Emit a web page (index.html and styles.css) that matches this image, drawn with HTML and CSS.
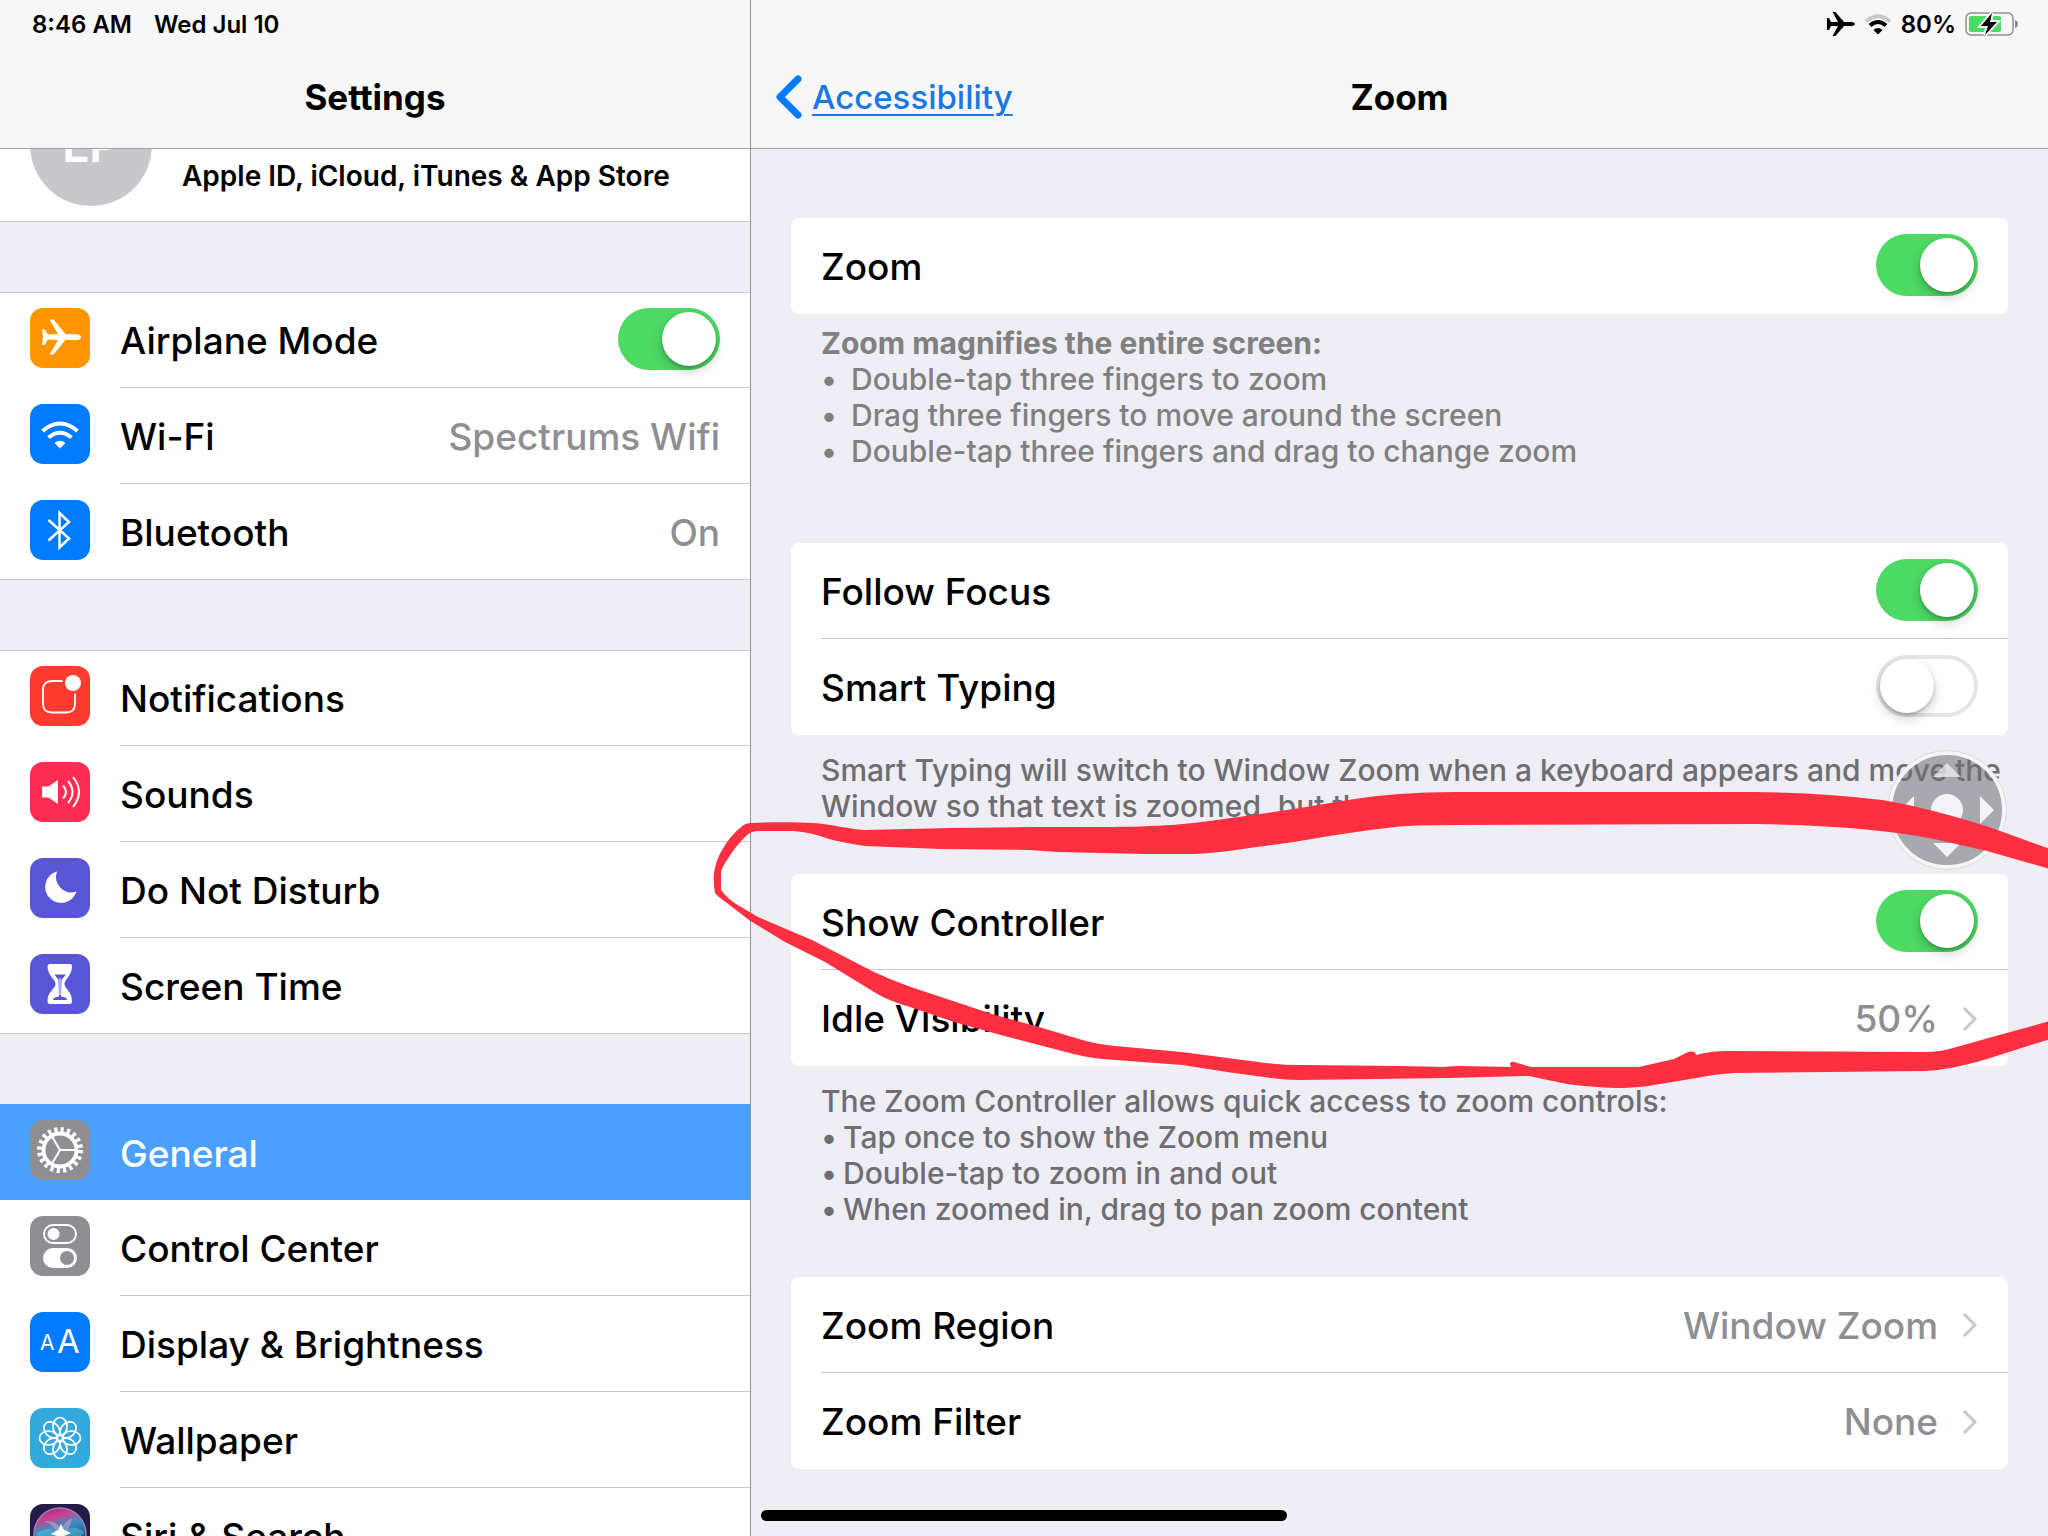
FILE: index.html
```html
<!DOCTYPE html>
<html lang="en">
<head>
    <meta charset="UTF-8">
    <meta name="viewport" content="width=device-width, initial-scale=1.0">
    <title>Settings - Zoom</title>
    <link rel="stylesheet" href="styles.css">
</head>
<body>
    <div class="screen">
        <!-- Left column -->
        <aside class="sidebar">
            <header class="bar">
                <div class="status">
                    <span>8:46 AM</span>
                    <span>Wed Jul 10</span>
                </div>
                <h1 class="bar-title">Settings</h1>
            </header>

            <div class="profile">
                <div class="avatar">LP</div>
                <p class="profile-text">Apple ID, iCloud, iTunes &amp; App Store</p>
            </div>

            <nav>
                <div class="group">
                    <div class="item">
                        <svg class="icon orange" viewBox="0 0 60 60"><path fill="#fff" d="M12 21 L14.500 21 L18 26.500 L28 26 L19.500 11.500 L23.500 11.500 L35.500 26 L47 26.300 Q51 27 51 29 Q51 31.500 47 32 L35.500 32 L23.500 46.500 L19.500 46.500 L28 32 L18 31.500 L14.500 37 L12 37 L13 29 Z"/></svg>
                        <div class="item-body">
                            <label for="airplane">Airplane Mode</label>
                            <input class="switch" type="checkbox" id="airplane" checked>
                        </div>
                    </div>
                    <a class="item" href="#">
                        <svg class="icon blue" viewBox="0 0 60 60"><g fill="none" stroke="#fff" stroke-width="4"><path d="M12.500 27 Q30 12 47.500 27"/><path d="M18.500 33.500 Q30 24 41.500 33.500"/></g><path fill="#fff" d="M24.500 39 Q30 34.500 35.500 39 L30 44.500 Z"/></svg>
                        <span class="item-body"><span>Wi-Fi</span><span class="value">Spectrums Wifi</span></span>
                    </a>
                    <a class="item" href="#">
                        <svg class="icon blue" viewBox="0 0 60 60"><path fill="none" stroke="#fff" stroke-width="2.500" d="M18.500 20 L39 38.500 L29.500 47.500 V13 L39 22 L18.500 40.500"/></svg>
                        <span class="item-body"><span>Bluetooth</span><span class="value">On</span></span>
                    </a>
                </div>

                <div class="group">
                    <a class="item" href="#">
                        <svg class="icon red" viewBox="0 0 60 60"><path fill="none" stroke="#fff" stroke-width="1.800" d="M32.500 15 H22 Q13 15 13 24 V38 Q13 46.500 22 46.500 H36 Q45 46.500 45 38 V27.500"/><circle cx="43" cy="17" r="8" fill="#fff"/></svg>
                        <span class="item-body">Notifications</span>
                    </a>
                    <a class="item" href="#">
                        <svg class="icon pink" viewBox="0 0 60 60"><path fill="#fff" d="M12 24.500 H18.500 L28 18 V42 L18.500 35.500 H12 Z"/><g fill="none" stroke="#fff" stroke-width="2"><path d="M33 23.500 Q39 30 33 36.500"/><path d="M38 19 Q47 30 38 41"/><path d="M43 15 Q55 30 43 45"/></g></svg>
                        <span class="item-body">Sounds</span>
                    </a>
                    <a class="item" href="#">
                        <svg class="icon purple" viewBox="0 0 60 60"><path fill="#fff" d="M27 13.500 A16 16 0 1 0 46.500 33.500 A15.500 15.500 0 0 1 27 13.500 Z"/></svg>
                        <span class="item-body">Do Not Disturb</span>
                    </a>
                    <a class="item" href="#">
                        <svg class="icon purple" viewBox="0 0 60 60"><path fill="#fff" d="M20 10 H40 Q42 10 42 12 C42 22 34.500 25 34.500 30 C34.500 35 42 37 42 47 Q42 50 40 50 H20 Q17.500 50 17.500 47 C17.500 37 25.500 35 25.500 30 C25.500 25 17.500 22 17.500 12 Q17.500 10 20 10 Z"/><path fill="#5856d6" d="M24.500 20.500 H36 L31.500 26 L31 42.500 Q37 43 37 46 H23 Q23 43 29 42.500 L28.500 26 Z"/><path stroke="#fff" d="M30 24 V41"/></svg>
                        <span class="item-body">Screen Time</span>
                    </a>
                </div>

                <div class="group">
                    <a class="item selected" href="#">
                        <svg class="icon gray" viewBox="0 0 60 60"><g fill="none" stroke="#fff"><circle cx="30" cy="30" r="20.500" stroke-width="5" stroke-dasharray="3.220 3.220"/><circle cx="30" cy="30" r="16.500" stroke-width="3.800"/><path stroke-width="2" d="M30 30 H46 M30 30 L22 16.500 M30 30 L22 43.500"/></g></svg>
                        <span class="item-body">General</span>
                    </a>
                    <a class="item" href="#">
                        <svg class="icon gray" viewBox="0 0 60 60"><rect x="14" y="9" width="32" height="18" rx="9" fill="none" stroke="#fff" stroke-width="2"/><circle cx="23.500" cy="18" r="6" fill="#fff"/><rect x="13" y="32" width="34" height="20" rx="10" fill="#fff"/><circle cx="37" cy="42" r="7" fill="#8e8e93"/></svg>
                        <span class="item-body">Control Center</span>
                    </a>
                    <a class="item" href="#">
                        <svg class="icon blue" viewBox="0 0 60 60"><text class="letter" x="10" y="38" font-size="21">A</text><text class="letter" x="27" y="41" font-size="33">A</text></svg>
                        <span class="item-body">Display &amp; Brightness</span>
                    </a>
                    <a class="item" href="#">
                        <svg class="icon sky" viewBox="0 0 60 60">
                            <defs><ellipse id="petal" cx="30" cy="18.500" rx="7" ry="9"/></defs>
                            <g fill="none" stroke="#fff" stroke-width="1.700">
                                <use href="#petal"/>
                                <use href="#petal" transform="rotate(45 30 30)"/>
                                <use href="#petal" transform="rotate(90 30 30)"/>
                                <use href="#petal" transform="rotate(135 30 30)"/>
                                <use href="#petal" transform="rotate(180 30 30)"/>
                                <use href="#petal" transform="rotate(225 30 30)"/>
                                <use href="#petal" transform="rotate(270 30 30)"/>
                                <use href="#petal" transform="rotate(315 30 30)"/>
                            </g>
                        </svg>
                        <span class="item-body">Wallpaper</span>
                    </a>
                    <a class="item" href="#">
                        <svg class="icon siri" viewBox="0 0 60 60">
                            <defs>
                                <linearGradient id="orb" x1="0" y1="0" x2="0.300" y2="1">
                                    <stop offset="0" stop-color="#7a2a80"/>
                                    <stop offset="0.250" stop-color="#d23c8c"/>
                                    <stop offset="0.450" stop-color="#3f8fc0"/>
                                    <stop offset="1" stop-color="#1b2f6b"/>
                                </linearGradient>
                            </defs>
                            <circle cx="30" cy="30" r="26" fill="url(#orb)" stroke="#9a7fb0" stroke-width="1.500"/>
                            <path fill="#4fc3dc" opacity="0.500" d="M6 30 Q20 20 30 30 Q42 18 54 28 Q44 44 30 44 Q14 44 6 30 Z"/>
                            <path fill="#e9a0cc" opacity="0.500" d="M14 17 Q26 16 31 25 Q38 14 42 15 Q40 25 34 29 H26 Q24 20 14 17 Z"/>
                            <path fill="#fff" d="M31 20 L34 26 L41 29 L34 32 L30 40 L27 32 L21 30 L28 26 Z"/>
                        </svg>
                        <span class="item-body">Siri &amp; Search</span>
                    </a>
                </div>
            </nav>
        </aside>

        <!-- Right column -->
        <main class="detail">
            <header class="bar">
                <div class="status status-right">
                    <svg width="28" height="26" viewBox="0 0 28 26"><path d="M0 7 L2 7 L4 11 L11 11 L5.500 1 L8.500 1 L17 11 L25 11 Q28 11.500 28 13 Q28 14.500 25 15 L17 15 L8.500 25 L5.500 25 L11 15 L4 15 L2 19 L0 19 Z"/></svg>
                    <svg width="28" height="22" viewBox="0 0 28 22"><g fill="none" stroke-width="4"><path stroke="#c8c8ca" d="M2 8.500 Q14 -2 26 8.500"/><path stroke="#000" d="M6 12.500 Q14 5.500 22 12.500"/></g><path d="M9.500 17 Q14 13 18.500 17 L14 21.500 Z"/></svg>
                    <span>80%</span>
                    <svg width="54" height="26" viewBox="0 0 54 26"><rect x="1" y="2" width="47" height="22" rx="5" fill="none" stroke="#8e8e91" stroke-width="1.500"/><rect x="4" y="5" width="32" height="16" rx="2" fill="#4cd964"/><path fill="#8e8e91" d="M50 9 Q53 10 53 13 Q53 16 50 17 Z"/><path stroke="#f7f7f7" stroke-width="4" d="M27 2 L16 15 H23 L20 24 L32 11 H25 Z"/><path d="M27 2 L16 15 H23 L20 24 L32 11 H25 Z"/></svg>
                </div>
                <div class="nav-row">
                    <a class="back" href="#">
                        <svg width="28" height="44" viewBox="0 0 28 44"><path fill="none" stroke="#007aff" stroke-width="7" stroke-linecap="round" stroke-linejoin="round" d="M23 4 L5 22 L23 40"/></svg>
                        <span>Accessibility</span>
                    </a>
                    <h2 class="bar-title">Zoom</h2>
                </div>
            </header>

            <div class="content">
                <section>
                    <div class="card">
                        <div class="row">
                            <label for="zoom">Zoom</label>
                            <input class="switch" type="checkbox" id="zoom" checked>
                        </div>
                    </div>
                    <div class="note light">
                        <strong>Zoom magnifies the entire screen:</strong>
                        <ul class="wide">
                            <li>Double-tap three fingers to zoom</li>
                            <li>Drag three fingers to move around the screen</li>
                            <li>Double-tap three fingers and drag to change zoom</li>
                        </ul>
                    </div>
                </section>

                <section>
                    <div class="card">
                        <div class="row">
                            <label for="follow">Follow Focus</label>
                            <input class="switch" type="checkbox" id="follow" checked>
                        </div>
                        <div class="row">
                            <label for="typing">Smart Typing</label>
                            <input class="switch" type="checkbox" id="typing">
                        </div>
                    </div>
                    <p class="note">Smart Typing will switch to Window Zoom when a keyboard appears and move the<br>Window so that text is zoomed, but the keyboard is not.</p>
                </section>

                <section>
                    <div class="card">
                        <div class="row">
                            <label for="controller">Show Controller</label>
                            <input class="switch" type="checkbox" id="controller" checked>
                        </div>
                        <a class="row" href="#">
                            <span>Idle Visibility</span>
                            <span class="value">50%</span>
                            <svg class="chevron" viewBox="0 0 16 26"><path d="M2 2 L13 13 L2 24"/></svg>
                        </a>
                    </div>
                    <div class="note">
                        The Zoom Controller allows quick access to zoom controls:
                        <ul>
                            <li>Tap once to show the Zoom menu</li>
                            <li>Double-tap to zoom in and out</li>
                            <li>When zoomed in, drag to pan zoom content</li>
                        </ul>
                    </div>
                </section>

                <section>
                    <div class="card">
                        <a class="row" href="#">
                            <span>Zoom Region</span>
                            <span class="value">Window Zoom</span>
                            <svg class="chevron" viewBox="0 0 16 26"><path d="M2 2 L13 13 L2 24"/></svg>
                        </a>
                        <a class="row" href="#">
                            <span>Zoom Filter</span>
                            <span class="value">None</span>
                            <svg class="chevron" viewBox="0 0 16 26"><path d="M2 2 L13 13 L2 24"/></svg>
                        </a>
                    </div>
                </section>
            </div>
            <div class="home-bar"></div>
        </main>

        <!-- Floating zoom controller -->
        <button class="controller" aria-label="Zoom Controller">
            <svg viewBox="0 0 120 120"><circle cx="60" cy="60" r="57" fill="#6f6f74" fill-opacity="0.550" stroke="#f6f6f9" stroke-width="4"/><circle cx="60" cy="60" r="59.500" fill="none" stroke="#dcdce0"/><g fill="#f4f4f8"><circle cx="60" cy="60" r="16"/><path d="M93 46 L107 60 L93 74 Z"/><path d="M27 46 L13 60 L27 74 Z"/><path d="M46 93 L60 107 L74 93 Z"/><path fill-opacity="0.700" d="M46 27 L60 13 L74 27 Z"/></g></svg>
        </button>

        <!-- Marker line -->
        <svg class="marker" viewBox="0 0 2048 1536">
            <path fill="#ff2f42" d="M751 823 C775 822 795 822 814 823 C835 825 848 829 865 830 L950 828 L1030 827 L1102 827 C1130 827 1155 826 1173 825 C1215 821 1260 814 1300 808 L1348 800 Q1395 792 1457 792 L1753 792 Q1825 793 1882 800 Q1930 808 1992 828 L2050 849 V869
                L1987 851 L1934 839 Q1870 826 1758 824 L1457 825 Q1410 825 1395 827 Q1350 832 1294 842 L1249 848 Q1210 854 1187 854 L1146 854 L1057 852 L1030 850 L941 849 L865 846 Q845 843 829 839 Q810 832 794 831 L758 831 Q750 831 745 837 Q735 847 729 857 Q722 867 721 872 L721 890 Q727 898 736 904 L758 917
                L812 940 L874 972 Q900 984 932 994 L995 1015 L1039 1027 L1079 1039 Q1095 1044 1115 1046 L1182 1052 L1258 1062 Q1280 1065 1300 1065 L1400 1066 L1443 1067 L1457 1066 L1511 1067 Q1508 1061 1514 1062 L1531 1067 H1639 L1674 1059 L1688 1052 Q1696 1050 1696 1055 Q1710 1051 1729 1051 L1925 1052 Q1940 1052 1953 1048 L1992 1037 L2050 1021 V1039
                L1987 1059 Q1950 1070 1925 1071 L1734 1073 Q1715 1074 1696 1078 L1648 1086 Q1630 1088 1617 1088 Q1590 1087 1567 1084 L1543 1079 L1529 1076 L1448 1078 L1300 1080 Q1285 1080 1271 1078 L1227 1072 L1182 1065 L1102 1059 Q1083 1057 1066 1052 L1008 1037 L954 1022 L910 1007 Q890 1001 879 995 L825 962 L785 942 L749 920 L727 903 Q717 896 715 893 Q713 880 714 873 Q716 860 722 850 Q730 836 740 828 Q745 823 751 823 Z"/>
        </svg>
    </div>
</body>
</html>
```
FILE: styles.css
```css
* {
    box-sizing: border-box;
}

body {
    margin: 0;
    font-family: 'Inter', sans-serif;
    font-size: 37px;
    font-weight: 500;
    color: #000;
    background-color: #efeef4;
}

h1, h2, p, ul {
    margin: 0;
    padding: 0;
}

a {
    color: inherit;
    text-decoration: none;
}

.screen {
    position: relative;
    display: grid;
    grid-template-columns: 751px 1fr;
    height: 100vh;
    overflow: hidden;
}

.sidebar {
    border-right: 1px solid #8e8e93;
    overflow: hidden;
}

.detail {
    display: flex;
    flex-direction: column;
    overflow: hidden;
}

/* Top bars */
.bar {
    height: 149px;
    flex-shrink: 0;
    background-color: #f7f7f7;
    border-bottom: 1px solid #a2a2aa;
}

.status {
    display: flex;
    align-items: center;
    gap: 22px;
    height: 48px;
    padding: 0 32px;
    font-size: 24px;
    font-weight: 600;
}

.status-right {
    justify-content: flex-end;
    gap: 9px;
    padding: 0 29px;
}

.bar-title {
    font-size: 35px;
    font-weight: 700;
    line-height: 98px;
    text-align: center;
}

.nav-row {
    display: grid;
    grid-template-columns: 1fr auto 1fr;
    align-items: center;
}

.back {
    display: flex;
    align-items: center;
    gap: 9px;
    padding-left: 24px;
    font-size: 33px;
    color: #1d77e2;
}

.back span {
    text-decoration: underline;
    text-decoration-thickness: 2px;
    text-underline-offset: 5px;
}

/* Sidebar */
.profile {
    display: flex;
    align-items: flex-end;
    gap: 30px;
    height: 73px;
    padding: 0 30px 15px;
    font-size: 28px;
    font-weight: 600;
    background-color: #fff;
    border-bottom: 1px solid #c8c7cc;
    overflow: hidden;
}

.avatar {
    flex-shrink: 0;
    width: 122px;
    height: 122px;
    border-radius: 50%;
    background-color: #c7c7cc;
    color: #fff;
    font-size: 48px;
    line-height: 122px;
    text-align: center;
}

.profile-text {
    line-height: 60px;
}

.group {
    margin-top: 70px;
    background-color: #fff;
    border-top: 1px solid #c8c7cc;
}

.item {
    display: flex;
    gap: 30px;
    height: 96px;
    padding-left: 30px;
}

/* first row shares its top pixel with the group border */
.item:first-child {
    margin-top: -1px;
}

.item:last-child {
    border-bottom: 1px solid #c8c7cc;
}

.icon {
    flex-shrink: 0;
    width: 60px;
    height: 60px;
    margin-top: 16px;
    border-radius: 13px;
}

.item-body {
    display: flex;
    flex: 1;
    align-items: center;
    justify-content: space-between;
    padding: 2px 30px 0 0;
    border-bottom: 1px solid #c8c7cc;
}

.item:last-child .item-body,
.selected .item-body {
    border-bottom: none;
}

.selected {
    background-color: #4ba0ff;
    color: #fff;
}

.value {
    color: #8e8e93;
}

.orange { background-color: #ff9500; }
.blue { background-color: #007aff; }
.red { background-color: #ff3b30; }
.pink { background-color: #ff2d55; }
.purple { background-color: #5856d6; }
.gray { background-color: #8e8e93; }
.sky { background-color: #34aadc; }
.siri { background-color: #251a45; }

.letter {
    fill: #fff;
    font-weight: 400;
}

/* Switches */
.switch {
    appearance: none;
    flex-shrink: 0;
    display: flex;
    width: 102px;
    height: 62px;
    margin: 0 0 3px;
    padding: 4px;
    border-radius: 31px;
    background-color: #fff;
    box-shadow: inset 0 0 0 4px #e5e5e5;
}

.switch::before {
    content: "";
    width: 54px;
    height: 54px;
    border-radius: 50%;
    background-color: #fff;
    box-shadow: 0 5px 12px rgba(0, 0, 0, 0.2), 0 2px 3px rgba(0, 0, 0, 0.2);
}

.switch:checked {
    justify-content: flex-end;
    background-color: #4cd964;
    box-shadow: none;
}

/* Detail pane */
.content {
    display: flex;
    flex-direction: column;
    padding: 69px 40px 0;
}

.card {
    padding-left: 30px;
    background-color: #fff;
    border-radius: 8px;
}

.row {
    display: flex;
    align-items: center;
    gap: 24px;
    height: 96px;
    padding: 1px 30px 0 0;
    border-bottom: 1px solid #c8c7cc;
}

.row:last-child {
    border-bottom: none;
}

.row .switch,
.row .value {
    margin-left: auto;
}

.chevron {
    flex-shrink: 0;
    width: 16px;
    height: 26px;
    fill: none;
    stroke: #c7c7cc;
    stroke-width: 3;
}

.note {
    padding: 17px 0 50px 30px;
    font-size: 30px;
    line-height: 36px;
    color: #6d6d72;
    white-space: nowrap;
}

.light {
    padding: 11px 0 74px 30px;
    color: #808080;
}

.note strong {
    font-weight: 700;
}

.note ul {
    list-style: none;
}

.note li::before {
    content: "•";
    margin-right: 6px;
}

.note .wide li::before {
    margin-right: 14px;
}

.home-bar {
    position: absolute;
    left: 761px;
    bottom: 15px;
    width: 526px;
    height: 11px;
    border-radius: 6px;
    background-color: #000;
}

/* Overlays */
.controller {
    position: absolute;
    top: 750px;
    right: 41px;
    width: 120px;
    height: 120px;
    padding: 0;
    border: none;
    background: none;
}

.marker {
    position: absolute;
    top: 0;
    left: 0;
    width: 100%;
    pointer-events: none;
}
```
